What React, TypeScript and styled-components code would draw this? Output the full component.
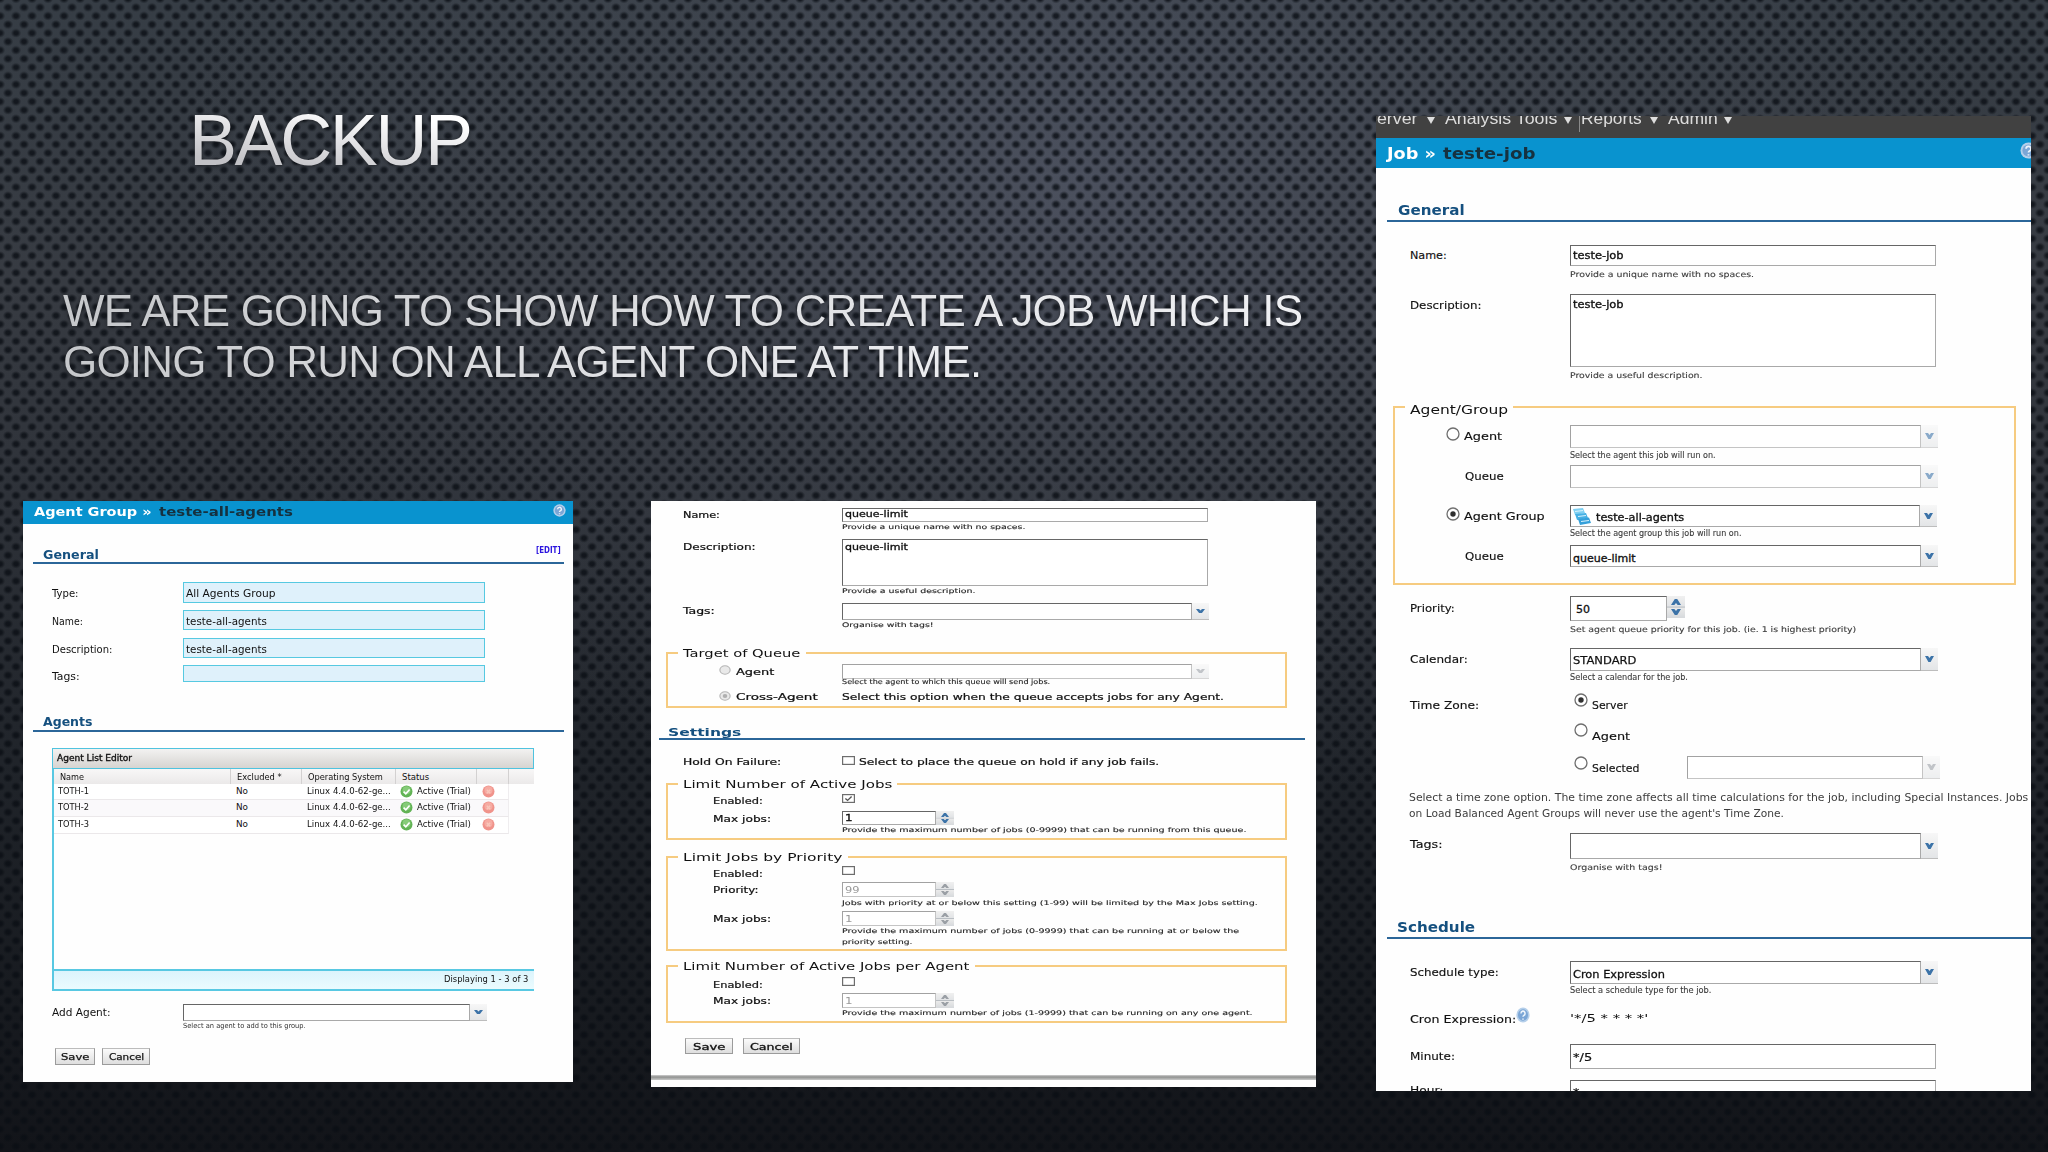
import React, { useLayoutEffect, useRef, useState } from "react";
import styled, { createGlobalStyle, css } from "styled-components";

const Global = createGlobalStyle`
  *, *::before, *::after { box-sizing: border-box; }
  html, body { margin: 0; padding: 0; background: #14171d; }
  body { width: 2048px; height: 1152px; overflow: hidden; font-family: "DejaVu Sans", Verdana, sans-serif; color: #111; }
`;

/* ---------- text ---------- */

type TextLook = { fs?: number; b?: number; bold?: boolean; color?: string; sans?: boolean; stroke?: number };

const Line = styled.div<TextLook & { w: number }>`
  flex: none;
  width: ${(p) => p.w}px;
  height: 14px;
  margin-top: ${(p) => (p.b ?? 11) - 7 - 0.346 * (p.fs ?? 10)}px;
  line-height: 14px;
  text-align: left;
  font-size: ${(p) => p.fs ?? 10}px;
  font-weight: ${(p) => (p.bold ? 700 : 400)};
  color: ${(p) => p.color ?? "#111"};
  white-space: pre;
  ${(p) => p.sans && css`font-family: "Liberation Sans", Arial, sans-serif;`}
  ${(p) => p.stroke && css`-webkit-text-stroke: ${p.stroke}px currentColor;`}
`;

const Stretch = styled.span`
  display: inline-block;
  transform-origin: 0 50%;
`;

function useStretch(w: number) {
  const ref = useRef<HTMLSpanElement>(null);
  const [k, setK] = useState(1);
  useLayoutEffect(() => {
    if (ref.current) setK(w / ref.current.offsetWidth);
  }, [w]);
  return { ref, style: { transform: `scaleX(${k})` } };
}

function T({ w, children, ...look }: TextLook & { w: number; children: string }) {
  const fit = useStretch(w);
  return (
    <Line w={w} {...look}>
      <Stretch {...fit}>{children}</Stretch>
    </Line>
  );
}

/* ---------- slide ---------- */

const Slide = styled.main`
  display: flex;
  width: 2048px;
  height: 1152px;
  overflow: hidden;
  background:
    radial-gradient(ellipse 5.2px 4.6px at 8px 7.4px, rgba(10, 14, 20, 0.78) 38%, rgba(10, 14, 20, 0) 100%) 0 0 / 16px 17.14px,
    radial-gradient(ellipse 5.2px 4.6px at 8px 7.4px, rgba(10, 14, 20, 0.78) 38%, rgba(10, 14, 20, 0) 100%) 8px 8.57px / 16px 17.14px,
    radial-gradient(ellipse 900px 640px at 1080px 180px, rgba(88, 93, 110, 0.62), rgba(74, 79, 90, 0.36) 50%, rgba(60, 64, 74, 0) 100%),
    linear-gradient(180deg, #363d45 0%, #373b42 25%, #2e3239 43%, #20242a 66%, #171a1f 88%, #121419 100%);
`;

const LeftSide = styled.div`
  width: 1376px;
  flex: none;
`;

const TitleBlock = styled.header`
  height: 285px;
  padding: 100px 0 0 189px;
`;

const metal = css`
  color: transparent;
  -webkit-background-clip: text;
  background-clip: text;
  filter: drop-shadow(0 1px 2px rgba(0, 0, 0, 0.4));
`;

const Title = styled.h1`
  margin: 0;
  width: 290px;
  font: 400 72px/80px "Liberation Sans", Arial, sans-serif;
  letter-spacing: -2.4px;
  white-space: nowrap;
  background-image: linear-gradient(188deg, #ffffff 22%, #e9e9eb 45%, #c2c2c6 80%);
  ${metal}
`;

const Lead = styled.p`
  margin: 0;
  height: 216px;
  padding-left: 63px;
  font: 400 44px/51px "Liberation Sans", Arial, sans-serif;
  letter-spacing: -0.82px;
`;

const LeadLine = styled.span<{ w: number }>`
  display: block;
  width: ${(p) => p.w}px;
  white-space: nowrap;
  background-image: linear-gradient(90deg, #c6c8cb, #dcdde0 45%, #f0f1f4);
  ${metal}
`;

const Shots = styled.div`
  display: flex;
  padding-left: 23px;
  gap: 78px;
`;

const Panel = styled.section<{ w: number; h: number; mt?: number; pt?: number }>`
  flex: none;
  width: ${(p) => p.w}px;
  height: ${(p) => p.h}px;
  margin-top: ${(p) => p.mt ?? 0}px;
  padding-top: ${(p) => p.pt ?? 0}px;
  background: #fefefe;
  overflow: hidden;
`;

const Bar = styled.div<{ h: number; pl: number; gap: number }>`
  display: flex;
  height: ${(p) => p.h}px;
  padding-left: ${(p) => p.pl}px;
  gap: ${(p) => p.gap}px;
  background: #0993cf;
  & > :last-child { margin-left: auto; }
`;

const Heading = styled.div<{ h: number; ml: number; mr: number; pl: number; mb: number }>`
  display: flex;
  justify-content: space-between;
  height: ${(p) => p.h}px;
  margin: 0 ${(p) => p.mr}px ${(p) => p.mb}px ${(p) => p.ml}px;
  padding: 0 3px 0 ${(p) => p.pl}px;
  border-bottom: 2px solid #2b6699;
`;

const Row = styled.div<{ h: number; pl?: number }>`
  display: flex;
  align-items: flex-start;
  height: ${(p) => p.h}px;
  padding-left: ${(p) => p.pl ?? 0}px;
`;

const Cell = styled.div<{ w: number; pl?: number }>`
  display: flex;
  align-items: flex-start;
  flex: none;
  width: ${(p) => p.w}px;
  padding-left: ${(p) => p.pl ?? 0}px;
`;

const Stack = styled.div`
  display: flex;
  flex-direction: column;
  align-items: flex-start;
`;

const Box = styled.div<{ w: number; h: number; view?: boolean; dim?: boolean }>`
  display: flex;
  flex: none;
  width: ${(p) => p.w}px;
  height: ${(p) => p.h}px;
  padding-left: 2px;
  background: #fff;
  border: 1px solid ${(p) => (p.dim ? "#c4c4c4" : "#a9a9a9")};
  border-top-color: ${(p) => (p.dim ? "#a2a2a2" : "#666")};
  border-left-color: ${(p) => (p.dim ? "#a2a2a2" : "#666")};
  ${(p) => p.view && css`background: #dff1fb; border: 1.5px solid #56c9e1;`}
`;

const DropButton = styled.div<{ h: number; dim?: boolean }>`
  display: flex;
  align-items: center;
  justify-content: center;
  width: 17px;
  height: ${(p) => p.h}px;
  background: linear-gradient(#f7f7f7, #e3e5e7);
  border-bottom: 1px solid #bdbdbd;
  opacity: ${(p) => (p.dim ? 0.6 : 1)};
`;

const Flex = styled.div`
  display: flex;
  align-items: flex-start;
`;

function Chevron({ w = 9, h = 6, up, gray }: { w?: number; h?: number; up?: boolean; gray?: boolean }) {
  return (
    <svg width={w} height={h} viewBox="0 0 9 6" preserveAspectRatio="none">
      <path d={up ? "M0 6 3.400 0H5.600L9 6H6L4.500 4 3 6Z" : "M0 0H3L4.500 2 6 0H9L5.600 6H3.400Z"} fill={gray ? "#9a9fa5" : "#3c73a8"} />
    </svg>
  );
}

function Select({ w, h, dim, gray, children }: { w: number; h: number; dim?: boolean; gray?: boolean; children?: React.ReactNode }) {
  return (
    <Flex>
      <Box w={w - 17} h={h} dim={dim}>{children}</Box>
      <DropButton h={h} dim={dim}><Chevron h={h < 18 ? 4.500 : 6} gray={gray} /></DropButton>
    </Flex>
  );
}

const SpinButtons = styled.div<{ h: number }>`
  display: flex;
  flex-direction: column;
  align-items: center;
  justify-content: space-evenly;
  width: 18px;
  height: ${(p) => p.h}px;
  background: linear-gradient(#f0f0f0, #e2e4e6 46%, #b9bec3 50%, #eaeaea 56%, #d6d9dc);
`;

function Spinner({ w, h, dim, children }: { w: number; h: number; dim?: boolean; children: React.ReactNode }) {
  const small = h < 18;
  return (
    <Flex>
      <Box w={w} h={h} dim={dim}>{children}</Box>
      <SpinButtons h={small ? h : h - 3}>
        <Chevron up gray={dim} w={small ? 8 : 10} h={small ? 4 : 6} />
        <Chevron gray={dim} w={small ? 8 : 10} h={small ? 4 : 6} />
      </SpinButtons>
    </Flex>
  );
}

const Mark = styled.span<{ mt: number; mr: number }>`
  display: block;
  flex: none;
  line-height: 0;
  margin-top: ${(p) => p.mt}px;
  margin-right: ${(p) => p.mr}px;
`;

function Radio({ w = 14, h = 14, mt = 0, mr = 4, on, gray }: { w?: number; h?: number; mt?: number; mr?: number; on?: boolean; gray?: boolean }) {
  return (
    <Mark mt={mt} mr={mr}>
      <svg width={w} height={h} viewBox="0 0 14 14" preserveAspectRatio="none">
        <circle cx="7" cy="7" r="6" fill={gray ? "#e9e9e9" : "#fff"} stroke={gray ? "#b5b5b5" : "#6e6e6e"} strokeWidth="1.3" />
        {on && <circle cx="7" cy="7" r="2.7" fill={gray ? "#b0b0b0" : "#2f2f2f"} />}
      </svg>
    </Mark>
  );
}

function Check({ on }: { on?: boolean }) {
  return (
    <Mark mt={0} mr={4}>
      <svg width="13" height="9" viewBox="0 0 13 9">
        <rect x=".6" y=".6" width="11.8" height="7.8" fill="#fff" stroke="#6d6d6d" strokeWidth="1.2" />
        {on && <path d="M3.4 4.4 5.6 6.4 9.6 2.4" fill="none" stroke="#555" strokeWidth="1.4" />}
      </svg>
    </Mark>
  );
}

function Help({ w, h, mt, mr = 0 }: { w: number; h: number; mt: number; mr?: number }) {
  return (
    <Mark mt={mt} mr={mr}>
      <svg width={w} height={h} viewBox="0 0 14 14" preserveAspectRatio="none">
        <circle cx="7" cy="7" r="6.6" fill="#b5cfea" />
        <circle cx="7" cy="7" r="5" fill="#7ba6d6" />
        <path d="M5 5.6a2 2 0 1 1 2.8 1.8Q7 7.8 7 8.6M7 10v1.1" fill="none" stroke="#eef5fc" strokeWidth="1.5" />
      </svg>
    </Mark>
  );
}

const Fieldset = styled.fieldset<{ h: number; mt?: number; ml: number; w: number; pt: number }>`
  min-width: 0;
  width: ${(p) => p.w}px;
  height: ${(p) => p.h}px;
  margin: ${(p) => p.mt ?? 0}px 0 0 ${(p) => p.ml}px;
  padding: ${(p) => p.pt}px 0 0;
  border: 2px solid #f6cb80;
`;

const Legend = styled.legend`
  display: flex;
  height: 14px;
  margin-left: 10px;
  padding: 0 5px;
`;

const Button = styled.button<{ w: number; h: number }>`
  display: flex;
  justify-content: center;
  width: ${(p) => p.w}px;
  height: ${(p) => p.h}px;
  padding: 0;
  border: 1px solid #9b9b9b;
  border-top-color: #bcbcbc;
  border-right-width: 1.5px;
  background: linear-gradient(#fbfbfb, #dedede);
  font: inherit;
`;

const Buttons = styled.div<{ mt: number; pl: number; gap: number }>`
  display: flex;
  gap: ${(p) => p.gap}px;
  margin-top: ${(p) => p.mt}px;
  padding-left: ${(p) => p.pl}px;
`;

/* ---------- agent group panel ---------- */

const Table = styled.div`
  width: 482px;
  margin-left: 29px;
  border-left: 2px solid #58c8e2;
`;
const TableTitle = styled.div`
  display: flex;
  height: 21px;
  margin-left: -2px;
  padding-left: 4px;
  border: 1.5px solid #4fc3df;
  background: linear-gradient(#f3f2f1, #d6d4d1);
`;
const columns = "177px 71px 94px 81px 32px 25px";
const TableHead = styled.div`
  display: grid;
  grid-template-columns: ${columns};
  height: 15px;
  background: linear-gradient(#f8f7f7, #ebe9e9);
`;
const HeadCell = styled.div`
  display: flex;
  padding-left: 6px;
  border-right: 1px solid #d3d1d1;
  &:last-child { border-right: 0; }
`;
const TableRow = styled.div<{ h: number; alt?: boolean }>`
  display: grid;
  grid-template-columns: ${columns};
  width: 455px;
  height: ${(p) => p.h}px;
  background: ${(p) => (p.alt ? "#faf9fb" : "#fff")};
  border-bottom: 1px solid #ebe8ea;
  border-right: 1px solid #efedef;
`;
const DataCell = styled.div<{ pl: number }>`
  display: flex;
  padding-left: ${(p) => p.pl}px;
`;
const TableFoot = styled.div`
  display: flex;
  justify-content: flex-end;
  height: 22px;
  margin-top: 135px;
  padding-right: 6px;
  border-top: 2px solid #58c8e2;
  border-bottom: 2px solid #58c8e2;
  background: linear-gradient(#dcf4fc, #ebfbfe);
`;

function Dot({ ok }: { ok?: boolean }) {
  return (
    <Mark mt={1} mr={4}>
      <svg width="13" height="13" viewBox="0 0 13 13">
        <circle cx="6.5" cy="6.5" r="6" fill={ok ? "#62b355" : "#f0938b"} />
        <circle cx="6.5" cy="5.2" r="4" fill={ok ? "#86cb78" : "#f6aba2"} />
        {ok
          ? <path d="M3.6 6.6 5.8 8.8 9.6 4.4" fill="none" stroke="#fff" strokeWidth="1.6" />
          : <path d="M4.8 4.8 8.2 8.2M8.2 4.8 4.8 8.2" stroke="#f9c6bb" strokeWidth="1.4" />}
      </svg>
    </Mark>
  );
}

const agents = ["TOTH-1", "TOTH-2", "TOTH-3"];
const groupFields = [
  { label: "Type:", lw: 27, value: "All Agents Group", vw: 89, row: 28, box: 21, b: 15.3 },
  { label: "Name:", lw: 31, value: "teste-all-agents", vw: 81, row: 28, box: 20, b: 15 },
  { label: "Description:", lw: 60, value: "teste-all-agents", vw: 81, row: 27, box: 20, b: 15 },
  { label: "Tags:", lw: 28, value: "", vw: 0, row: 22, box: 17, b: 15 },
];
const blue = "#15507f";

function AgentGroupPanel() {
  return (
    <Panel w={550} h={581}>
      <Bar h={23} pl={11} gap={7}>
        <T w={118} fs={12.5} b={15.7} bold color="#fff">Agent Group »</T>
        <T w={134} fs={12.5} b={15.7} bold color="#16313f">teste-all-agents</T>
        <Help w={13} h={13} mt={3} mr={7} />
      </Bar>
      <Heading h={40} ml={10} mr={9} pl={10} mb={18}>
        <T w={56} fs={12} b={35.3} bold color={blue}>General</T>
        <T w={25} fs={8.5} b={29} bold color="#2b14df">[EDIT]</T>
      </Heading>
      {groupFields.map((f) => (
        <Row key={f.label} h={f.row} pl={29}>
          <Cell w={131}><T w={f.lw} fs={9.7} b={f.b}>{f.label}</T></Cell>
          <Box w={302} h={f.box} view>{f.value && <T w={f.vw} fs={9.7} b={f.b - 1}>{f.value}</T>}</Box>
        </Row>
      ))}
      <Heading h={45} ml={10} mr={9} pl={10} mb={16}>
        <T w={49} fs={12} b={38.7} bold color={blue}>Agents</T>
      </Heading>
      <Table>
        <TableTitle><T w={75} fs={8.8} b={12} stroke={0.35}>Agent List Editor</T></TableTitle>
        <TableHead>
          <HeadCell><T w={24} fs={8.5} b={10.7}>Name</T></HeadCell>
          <HeadCell><T w={45} fs={8.5} b={10.7}>Excluded *</T></HeadCell>
          <HeadCell><T w={75} fs={8.5} b={10.7}>Operating System</T></HeadCell>
          <HeadCell><T w={27} fs={8.5} b={10.7}>Status</T></HeadCell>
          <HeadCell />
          <HeadCell />
        </TableHead>
        {agents.map((name, i) => (
          <TableRow key={name} h={i ? 17 : 16} alt={i === 1}>
            <DataCell pl={4}><T w={31} fs={8.8} b={9.7}>{name}</T></DataCell>
            <DataCell pl={5}><T w={12} fs={8.8} b={9.7}>No</T></DataCell>
            <DataCell pl={5}><T w={84} fs={8.8} b={9.7}>Linux 4.4.0-62-ge...</T></DataCell>
            <DataCell pl={4}><Dot ok /><T w={54} fs={8.8} b={9.7}>Active (Trial)</T></DataCell>
            <DataCell pl={5}><Dot /></DataCell>
          </TableRow>
        ))}
        <TableFoot><T w={84} fs={8.8} b={11}>Displaying 1 - 3 of 3</T></TableFoot>
      </Table>
      <Row h={57} pl={29}>
        <Cell w={131}><T w={59} fs={10} b={25}>Add Agent:</T></Cell>
        <AddAgent>
          <Select w={304} h={17} />
          <T w={123} fs={7} b={7} color="#333">Select an agent to add to this group.</T>
        </AddAgent>
      </Row>
      <Buttons mt={0} pl={32} gap={7}>
        <Button w={40} h={17}><T w={28} fs={9.5} b={11.2} stroke={0.25}>Save</T></Button>
        <Button w={48} h={17}><T w={35} fs={9.5} b={11.2} stroke={0.25}>Cancel</T></Button>
      </Buttons>
    </Panel>
  );
}

const AddAgent = styled(Stack)`
  padding-top: 13px;
`;

/* ---------- queue panel ---------- */

const PageEdge = styled.div`
  height: 5px;
  margin-top: 21px;
  background: linear-gradient(#d0d0d0, #8f918f 40%, #c9c9c9);
`;

const Q = { fs: 8.2, stroke: 0.2 };
const H = { fs: 6.3, stroke: 0.12, color: "#222" };

function LimitRow({ h, label, lw, b, children }: { h: number; label: string; lw: number; b: number; children: React.ReactNode }) {
  return (
    <Row h={h} pl={45}>
      <Cell w={129}><T w={lw} {...Q} b={b + 0.5}>{label}</T></Cell>
      <Stack>{children}</Stack>
    </Row>
  );
}

function QueuePanel() {
  return (
    <Panel w={665} h={586} pt={7}>
      <Row h={31} pl={32}>
        <Cell w={159}><T w={37} {...Q} b={9.4}>Name:</T></Cell>
        <Stack>
          <Box w={366} h={14}><T w={63} fs={8.6} stroke={0.3} b={8}>queue-limit</T></Box>
          <T w={184} {...H} b={7}>Provide a unique name with no spaces.</T>
        </Stack>
      </Row>
      <Row h={64} pl={32}>
        <Cell w={159}><T w={72} {...Q} b={11}>Description:</T></Cell>
        <Stack>
          <Box w={366} h={47}><T w={63} fs={8.6} stroke={0.3} b={10}>queue-limit</T></Box>
          <T w={133} {...H} b={7}>Provide a useful description.</T>
        </Stack>
      </Row>
      <Row h={43} pl={32}>
        <Cell w={159}><T w={32} {...Q} b={10.4}>Tags:</T></Cell>
        <Stack>
          <Select w={367} h={17} />
          <T w={92} {...H} b={7.6}>Organise with tags!</T>
        </Stack>
      </Row>
      <Fieldset h={62} ml={15} w={621} pt={4}>
        <Legend><T w={118} fs={9.6} b={11.3}>Target of Queue</T></Legend>
        <Row h={25} pl={51}>
          <Cell w={123}>
            <Radio w={12} h={10} mt={1} mr={5} gray />
            <T w={38} {...Q} b={10.9}>Agent</T>
          </Cell>
          <Stack>
            <Select w={367} h={15} dim gray />
            <T w={208} {...H} fs={6.8} b={5.6}>Select the agent to which this queue will send jobs.</T>
          </Stack>
        </Row>
        <Row h={14} pl={51}>
          <Cell w={123}>
            <Radio w={12} h={10} mt={2} mr={5} on gray />
            <T w={81} {...Q} b={10.9}>Cross-Agent</T>
          </Cell>
          <T w={382} {...Q} b={10.9}>Select this option when the queue accepts jobs for any Agent.</T>
        </Row>
      </Fieldset>
      <Heading h={32} ml={8} mr={11} pl={9} mb={16}>
        <T w={74} fs={10.5} b={28} bold color={blue}>Settings</T>
      </Heading>
      <Row h={21} pl={32}>
        <Cell w={159}><T w={98} {...Q} b={8.6}>Hold On Failure:</T></Cell>
        <Check />
        <T w={301} {...Q} b={8.6}>Select to place the queue on hold if any job fails.</T>
      </Row>
      <Fieldset h={63} ml={15} w={621} pt={3}>
        <Legend><T w={209} fs={9.6} b={11.2}>Limit Number of Active Jobs</T></Legend>
        <LimitRow h={17} label="Enabled:" lw={50} b={9.7}><Check on /></LimitRow>
        <LimitRow h={20} label="Max jobs:" lw={58} b={10.3}>
          <Spinner w={94} h={14}><T w={7} fs={8.5} stroke={0.3} b={9}>1</T></Spinner>
          <T w={404} {...H} b={7.3}>Provide the maximum number of jobs (0-9999) that can be running from this queue.</T>
        </LimitRow>
      </Fieldset>
      <Fieldset h={101} mt={10} ml={15} w={621} pt={2}>
        <Legend><T w={160} fs={9.6} b={11.2}>Limit Jobs by Priority</T></Legend>
        <LimitRow h={16} label="Enabled:" lw={50} b={10}><Check /></LimitRow>
        <LimitRow h={29} label="Priority:" lw={45} b={10.3}>
          <Spinner w={94} h={15} dim><T w={14} fs={9} color="#999" b={10}>99</T></Spinner>
          <T w={416} {...H} b={7.8}>Jobs with priority at or below this setting (1-99) will be limited by the Max Jobs setting.</T>
        </LimitRow>
        <LimitRow h={29} label="Max jobs:" lw={58} b={10.3}>
          <Spinner w={94} h={15} dim><T w={7} fs={8.5} color="#999" b={10}>1</T></Spinner>
          <T w={397} {...H} b={7.3}>Provide the maximum number of jobs (0-9999) that can be running at or below the</T>
          <T w={71} {...H} b={5.6}>priority setting.</T>
        </LimitRow>
      </Fieldset>
      <Fieldset h={64} mt={8} ml={15} w={621} pt={4}>
        <Legend><T w={287} fs={9.6} b={11.5}>Limit Number of Active Jobs per Agent</T></Legend>
        <LimitRow h={16} label="Enabled:" lw={50} b={10}><Check /></LimitRow>
        <LimitRow h={20} label="Max jobs:" lw={58} b={10.3}>
          <Spinner w={94} h={15} dim><T w={7} fs={8.5} color="#999" b={10}>1</T></Spinner>
          <T w={411} {...H} b={7.3}>Provide the maximum number of jobs (1-9999) that can be running on any one agent.</T>
        </LimitRow>
      </Fieldset>
      <Buttons mt={15} pl={34} gap={10}>
        <Button w={48} h={16}><T w={33} fs={8.8} b={10.6} stroke={0.3}>Save</T></Button>
        <Button w={57} h={16}><T w={43} fs={8.8} b={10.6} stroke={0.3}>Cancel</T></Button>
      </Buttons>
      <PageEdge />
    </Panel>
  );
}

/* ---------- job panel ---------- */

const Nav = styled.nav`
  display: flex;
  height: 22px;
  background: #414141;
  overflow: hidden;
`;
const NavItem = styled.div<{ w: number; divider?: boolean }>`
  display: flex;
  flex: none;
  justify-content: flex-end;
  width: ${(p) => p.w}px;
  height: 16px;
  border-right: ${(p) => (p.divider ? "1px solid #8a8a8a" : "0")};
`;
const NavText = styled.div<{ gap: number }>`
  display: flex;
  justify-content: flex-end;
  gap: ${(p) => p.gap}px;
`;

const P = { fs: 11.2, stroke: 0.15 };
const S = { fs: 7.8, color: "#3c3c3c", stroke: 0.12 };

function Triangle() {
  return (
    <Mark mt={1} mr={0}>
      <svg width="8" height="7" viewBox="0 0 8 7"><path d="M0 0H8L4 7Z" fill="#dedede" /></svg>
    </Mark>
  );
}

function JobRow({ h, label, lw, b = 15.5, pl = 34, children }: { h: number; label: string; lw: number; b?: number; pl?: number; children?: React.ReactNode }) {
  return (
    <Row h={h} pl={pl}>
      <Cell w={194 - pl}><T w={lw} {...P} b={b}>{label}</T></Cell>
      <Stack>{children}</Stack>
    </Row>
  );
}

function ServersIcon() {
  return (
    <Mark mt={2} mr={5}>
      <svg width="18" height="17" viewBox="0 0 18 17">
        <path d="M0 1 10 0 12 5 2 7Z" fill="#7fd0f2" />
        <path d="M2 6 13 5 15 10 4 12Z" fill="#45b0e4" />
        <path d="M5 11 16 9.500 18 15 7 17Z" fill="#35a0da" />
        <path d="M2 3.500 10 2.500M5 8.500 13 7.500M8 13.500 16 12.500" stroke="#d8f2fd" strokeWidth="1.200" />
      </svg>
    </Mark>
  );
}

function JobPanel() {
  return (
    <Panel w={655} h={975} mt={116}>
      <Nav>
        <NavItem w={59}><NavText gap={9}><T w={53} fs={16.5} b={7.3} sans color="#dcdcdc">Server</T><Triangle /></NavText></NavItem>
        <NavItem w={145} divider><NavText gap={7}><T w={112} fs={16.5} b={7.3} sans color="#dcdcdc">Analysis Tools</T><NavEnd><Triangle /></NavEnd></NavText></NavItem>
        <NavItem w={78}><NavText gap={8}><T w={61} fs={16.5} b={7.3} sans color="#dcdcdc">Reports</T><Triangle /></NavText></NavItem>
        <NavItem w={74}><NavText gap={6}><T w={50} fs={16.5} b={7.3} sans color="#dcdcdc">Admin</T><Triangle /></NavText></NavItem>
      </Nav>
      <Bar h={30} pl={11} gap={7}>
        <T w={49} fs={15.5} b={21} bold color="#fff">Job »</T>
        <T w={93} fs={15.5} b={21} bold color="#16313f">teste-job</T>
        <Help w={17} h={17} mt={4} mr={-6} />
      </Bar>
      <Heading h={54} ml={11} mr={0} pl={11} mb={23}>
        <T w={67} fs={14} b={47.300} bold color={blue}>General</T>
      </Heading>
      <JobRow h={49} label="Name:" lw={37} b={15.2}>
        <Box w={366} h={21}><T w={51} fs={11} stroke={0.35} b={14}>teste-job</T></Box>
        <T w={184} {...S} b={11.7}>Provide a unique name with no spaces.</T>
      </JobRow>
      <JobRow h={106} label="Description:" lw={72}>
        <Box w={366} h={73}><T w={51} fs={11} stroke={0.35} b={14}>teste-job</T></Box>
        <T w={133} {...S} b={11.7}>Provide a useful description.</T>
      </JobRow>
      <Fieldset h={185} ml={17} w={623} pt={11}>
        <Legend><T w={98} fs={12.8} b={14.7}>Agent/Group</T></Legend>
        <Row h={40} pl={51}>
          <Cell w={124}>
            <Radio mt={2} mr={4} />
            <T w={38} {...P} b={15.8}>Agent</T>
          </Cell>
          <Stack>
            <Select w={368} h={23} dim />
            <T w={146} {...S} fs={8} b={10.3}>Select the agent this job will run on.</T>
          </Stack>
        </Row>
        <Row h={40} pl={70}>
          <Cell w={105}><T w={39} {...P} b={15.7}>Queue</T></Cell>
          <Select w={368} h={23} dim />
        </Row>
        <Row h={40} pl={51}>
          <Cell w={124}>
            <Radio mt={2} mr={4} on />
            <T w={81} {...P} b={15.8}>Agent Group</T>
          </Cell>
          <Stack>
            <Select w={367} h={22}>
              <ServersIcon />
              <T w={88} fs={11} stroke={0.35} b={16}>teste-all-agents</T>
            </Select>
            <T w={171} {...S} fs={8} b={9.800}>Select the agent group this job will run on.</T>
          </Stack>
        </Row>
        <Row h={30} pl={70}>
          <Cell w={105}><T w={39} {...P} b={15.8}>Queue</T></Cell>
          <Select w={368} h={22}><T w={63} fs={11} stroke={0.35} b={16.5}>queue-limit</T></Select>
        </Row>
      </Fieldset>
      <JobGap />
      <JobRow h={52} label="Priority:" lw={45} b={16.7}>
        <Spinner w={97} h={25}><IndentedValue><T w={14} fs={11} stroke={0.3} b={16.4}>50</T></IndentedValue></Spinner>
        <T w={286} {...S} b={12}>Set agent queue priority for this job. (ie. 1 is highest priority)</T>
      </JobRow>
      <JobRow h={43} label="Calendar:" lw={58} b={15.5}>
        <Select w={368} h={23}><T w={64} fs={11} stroke={0.25} b={15.8}>STANDARD</T></Select>
        <T w={118} {...S} fs={8} b={9.900}>Select a calendar for the job.</T>
      </JobRow>
      <JobRow h={30} label="Time Zone:" lw={69} b={18.9}>
        <Choice><Radio mt={2} on /><T w={36} {...P} b={18.9}>Server</T></Choice>
      </JobRow>
      <JobRow h={35} label="" lw={1}>
        <Choice><Radio mt={2} /><T w={38} {...P} b={19.4}>Agent</T></Choice>
      </JobRow>
      <JobRow h={35} label="" lw={1}>
        <Choice>
          <Radio mt={0} />
          <T w={48} {...P} b={16.5}>Selected</T>
          <ZoneSelect><Select w={253} h={23} dim gray /></ZoneSelect>
        </Choice>
      </JobRow>
      <Note>
        <T w={619} fs={9.8} b={10.4} color="#3c3c3c">Select a time zone option. The time zone affects all time calculations for the job, including Special Instances. Jobs</T>
        <T w={375} fs={9.8} b={12.100} color="#3c3c3c">on Load Balanced Agent Groups will never use the agent's Time Zone.</T>
      </Note>
      <JobRow h={47} label="Tags:" lw={33} b={15.9}>
        <Select w={368} h={26} />
        <T w={92} {...S} b={12}>Organise with tags!</T>
      </JobRow>
      <Heading h={59} ml={11} mr={0} pl={10} mb={22}>
        <T w={78} fs={14} b={52.2} bold color={blue}>Schedule</T>
      </Heading>
      <JobRow h={43} label="Schedule type:" lw={89} b={16}>
        <Select w={368} h={23}><T w={92} fs={11} stroke={0.3} b={16.4}>Cron Expression</T></Select>
        <T w={141} {...S} fs={8} b={10.2}>Select a schedule type for the job.</T>
      </JobRow>
      <Row h={40} pl={34}>
        <Cell w={160}>
          <T w={106} {...P} b={19.600}>Cron Expression:</T>
          <Help w={14} h={16} mt={3} />
        </Cell>
        <T w={78} fs={11} b={19}>'*/5 * * * *'</T>
      </Row>
      <JobRow h={36} label="Minute:" lw={45} b={16.500}>
        <Box w={366} h={25}><T w={19} fs={11} stroke={0.2} b={16.500}>*/5</T></Box>
      </JobRow>
      <JobRow h={25} label="Hour:" lw={34} b={15}>
        <Box w={366} h={25}><T w={7} fs={11} stroke={0.2} b={16}>*</T></Box>
      </JobRow>
    </Panel>
  );
}

const NavEnd = styled.div`
  padding-right: 7px;
`;
const JobGap = styled.div`
  height: 11px;
`;
const IndentedValue = styled.div`
  padding-left: 3px;
`;
const Choice = styled.div`
  display: flex;
  align-items: flex-start;
  padding-left: 4px;
`;
const ZoneSelect = styled.div`
  padding-left: 47px;
`;
const Note = styled.div`
  height: 42px;
  padding-left: 33px;
`;

export default function App() {
  return (
    <>
      <Global />
      <Slide>
        <LeftSide>
          <TitleBlock><Title>BACKUP</Title></TitleBlock>
          <Lead>
            <LeadLine w={1270}>WE ARE GOING TO SHOW HOW TO CREATE A JOB WHICH IS</LeadLine>
            <LeadLine w={1000}>GOING TO RUN ON ALL AGENT ONE AT TIME.</LeadLine>
          </Lead>
          <Shots>
            <AgentGroupPanel />
            <QueuePanel />
          </Shots>
        </LeftSide>
        <JobPanel />
      </Slide>
    </>
  );
}
